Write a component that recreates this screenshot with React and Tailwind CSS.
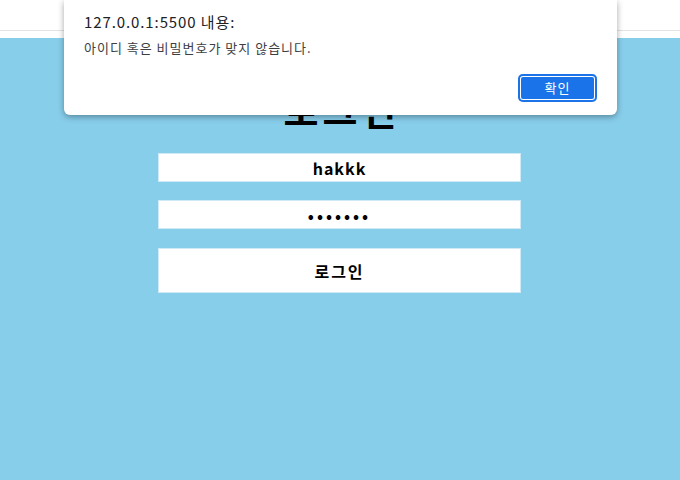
import { useState } from 'react';

const KR = "font-['Noto_Sans_CJK_KR','Noto_Sans',sans-serif]";

function AlertDialog() {
  return (
    <div className="absolute left-[64px] top-0 w-[553px] h-[115px] bg-white rounded-b-[6px] shadow-[0_2px_6px_rgba(0,0,0,0.35)] px-5 pt-[12px] font-['Noto_Sans_CJK_KR','Noto_Sans',sans-serif]">
      <p className="text-[15px] leading-[20px] tracking-[0.9px] text-[#202124]">127.0.0.1:5500 내용:</p>
      <p className="mt-[7px] text-[13px] leading-[18px] tracking-[1px] text-[#3c4043]">
        아이디 혹은 비밀번호가 맞지 않습니다.
      </p>
      <div className="flex justify-end mt-[17px]">
        <button
          type="button"
          className="w-[79px] h-[28px] rounded-[5px] bg-[#1a73e8] text-white text-[13px] tracking-[1px] shadow-[inset_0_0_0_2px_#1a73e8,inset_0_0_0_3px_#ffffff]"
        >
          확인
        </button>
      </div>
    </div>
  );
}

export default function App() {
  const [id, setId] = useState('hakkk');
  const [pw, setPw] = useState('1234567');

  return (
    <div className="relative w-[680px] h-[480px] flex flex-col overflow-hidden">
      <div className="h-[38px] bg-white shrink-0">
        <div className="h-[30px]" />
        <div className="h-px bg-[#e3e3e3]" />
      </div>

      <div className="flex-1 bg-[#87ceeb] flex flex-col pt-[48px]">
        <h1 className={`${KR} self-center pl-[4px] text-[38px] leading-[46px] tracking-[4px] font-bold text-black`}>로그인</h1>
        <form
          className="mt-[21px] ml-[158px] w-[363px] flex flex-col"
          onSubmit={(e) => e.preventDefault()}
        >
          <input
            type="text"
            value={id}
            onChange={(e) => setId(e.target.value)}
            className={`${KR} h-[29px] bg-white border border-[#cfeaf6] text-center text-[16px] tracking-[1px] font-bold text-black outline-none`}
          />
          <input
            type="password"
            value={pw}
            onChange={(e) => setPw(e.target.value)}
            className={`${KR} mt-[18px] h-[29px] bg-white border border-[#cfeaf6] text-center text-[16px] tracking-[3px] font-bold text-black outline-none`}
          />
          <button
            type="submit"
            className={`${KR} mt-[19px] h-[45px] bg-white border border-[#cfeaf6] text-[16px] tracking-[2px] font-bold text-black`}
          >
            로그인
          </button>
        </form>
      </div>

      <AlertDialog />
    </div>
  );
}
